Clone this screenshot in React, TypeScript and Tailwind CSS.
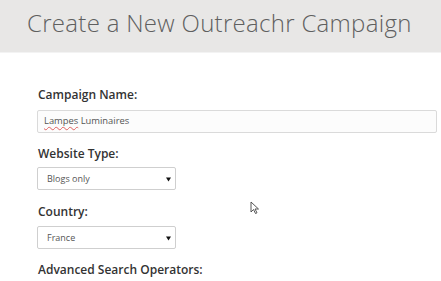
import React from "react";

const Caret = () => (
  <svg width="5" height="5" viewBox="0 0 5 5" className="absolute right-[4px] top-[9px]">
    <path d="M0 0.5 L5 0.5 L2.5 4.5 Z" fill="#111" />
  </svg>
);

export default function App() {
  return (
    <div className="w-[441px] h-[281px] bg-white overflow-hidden relative" style={{ fontFamily: '"Open Sans", sans-serif' }}>
      <div className="h-[53px] bg-[#e8e7e6] border-b border-[#f3f3f3] pl-[27px] pt-[11px]">
        <h1 className="text-[24px] font-light text-[#5f5f5f] leading-[24px] tracking-[0.3px] whitespace-nowrap">Create a New Outreachr Campaign</h1>
      </div>
      <div className="pl-[37px] pr-[4px] pt-[36px] flex flex-col">
        <label className="h-[12px] text-[12px] font-semibold text-[#333] leading-none mb-[9px] ml-[1px]">Campaign Name:</label>
        <div className="h-[23px] border border-[#dadada] rounded-[2px] bg-[#fcfcfc] flex items-center pl-[6px] text-[9.4px] text-[#555]">
          <span className="underline decoration-wavy decoration-[#e06060] decoration-[0.5px] underline-offset-2">Lampes</span>&nbsp;Luminaires
        </div>
        <label className="h-[12px] text-[12px] font-semibold text-[#333] leading-none mt-[15px] mb-[7px] ml-[1px]">Website Type:</label>
        <div className="relative w-[139px] h-[23px] border border-[#cfcfcf] rounded-[2px] bg-white flex items-center pl-[9px] text-[9px] text-[#555]">
          Blogs only
          <Caret />
        </div>
        <label className="h-[12px] text-[12px] font-semibold text-[#333] leading-none mt-[16px] mb-[8px] ml-[1px]">Country:</label>
        <div className="relative w-[139px] h-[23px] border border-[#cfcfcf] rounded-[2px] bg-white flex items-center pl-[9px] text-[9px] text-[#555]">
          France
          <Caret />
        </div>
        <label className="h-[12px] text-[12px] font-semibold text-[#333] leading-none mt-[15px] ml-[1px] whitespace-nowrap">Advanced Search Operators:</label>
      </div>
      <svg width="10" height="14" viewBox="0 0 10 14" className="absolute left-[250px] top-[201px]">
        <path d="M1 1 L1 11 L3.5 8.5 L5.5 12.5 L7 11.8 L5 8 L8.5 8 Z" fill="white" stroke="#444" strokeWidth="0.9" strokeLinejoin="round" />
      </svg>
    </div>
  );
}
